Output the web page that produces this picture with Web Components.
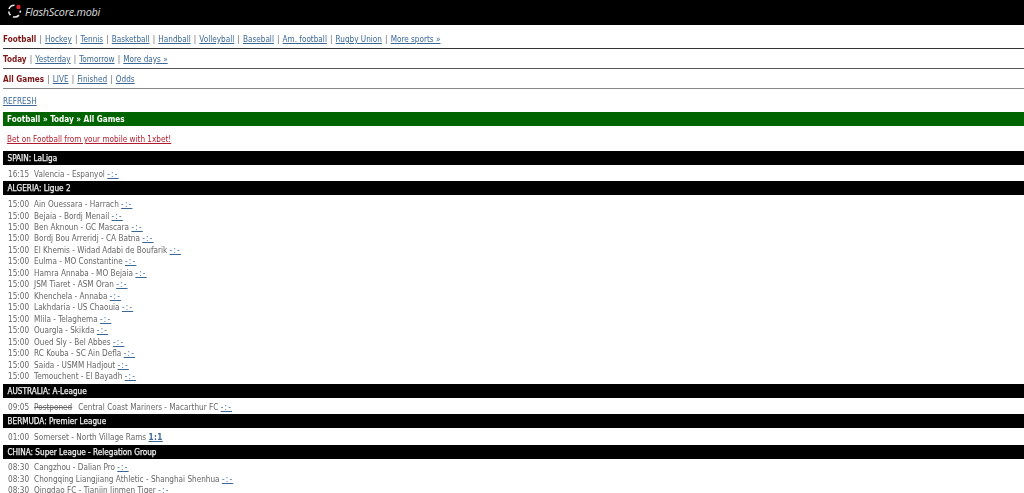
<!DOCTYPE html>
<html>
<head>
<meta charset="utf-8">
<title>FlashScore.mobi</title>
<style>
    html, body { margin: 0; padding: 0; background: #fff; height: 493px; overflow: hidden; }
    body { font-family: "DejaVu Sans Condensed", "DejaVu Sans", sans-serif; font-size: 8.15px; color: #666; }
    main { display: block; padding: 4px 0 0 3px; filter: blur(0.25px); }
</style>
</head>
<body>
<fs-header></fs-header>
<main>
    <fs-nav active="Football" items="Hockey|Tennis|Basketball|Handball|Volleyball|Baseball|Am. football|Rugby Union|More sports »" line="#333"></fs-nav>
    <fs-nav active="Today" items="Yesterday|Tomorrow|More days »" line="#555"></fs-nav>
    <fs-nav active="All Games" items="LIVE|Finished|Odds" line="#888"></fs-nav>
    <fs-refresh></fs-refresh>
    <fs-crumb>Football » Today » All Games</fs-crumb>
    <fs-promo>Bet on Football from your mobile with 1xbet!</fs-promo>

    <fs-league name="SPAIN: LaLiga">
        <fs-match time="16:15" teams="Valencia - Espanyol"></fs-match>
    </fs-league>
    <fs-league name="ALGERIA: Ligue 2">
        <fs-match time="15:00" teams="Ain Ouessara - Harrach"></fs-match>
        <fs-match time="15:00" teams="Bejaia - Bordj Menail"></fs-match>
        <fs-match time="15:00" teams="Ben Aknoun - GC Mascara"></fs-match>
        <fs-match time="15:00" teams="Bordj Bou Arreridj - CA Batna"></fs-match>
        <fs-match time="15:00" teams="El Khemis - Widad Adabi de Boufarik"></fs-match>
        <fs-match time="15:00" teams="Eulma - MO Constantine"></fs-match>
        <fs-match time="15:00" teams="Hamra Annaba - MO Bejaia"></fs-match>
        <fs-match time="15:00" teams="JSM Tiaret - ASM Oran"></fs-match>
        <fs-match time="15:00" teams="Khenchela - Annaba"></fs-match>
        <fs-match time="15:00" teams="Lakhdaria - US Chaouia"></fs-match>
        <fs-match time="15:00" teams="Mlila - Telaghema"></fs-match>
        <fs-match time="15:00" teams="Ouargla - Skikda"></fs-match>
        <fs-match time="15:00" teams="Oued Sly - Bel Abbes"></fs-match>
        <fs-match time="15:00" teams="RC Kouba - SC Ain Defla"></fs-match>
        <fs-match time="15:00" teams="Saida - USMM Hadjout"></fs-match>
        <fs-match time="15:00" teams="Temouchent - El Bayadh"></fs-match>
    </fs-league>
    <fs-league name="AUSTRALIA: A-League">
        <fs-match time="09:05" status="Postponed" teams="Central Coast Mariners - Macarthur FC"></fs-match>
    </fs-league>
    <fs-league name="BERMUDA: Premier League">
        <fs-match time="01:00" teams="Somerset - North Village Rams" score="1:1"></fs-match>
    </fs-league>
    <fs-league name="CHINA: Super League - Relegation Group">
        <fs-match time="08:30" teams="Cangzhou - Dalian Pro"></fs-match>
        <fs-match time="08:30" teams="Chongqing Liangjiang Athletic - Shanghai Shenhua"></fs-match>
        <fs-match time="08:30" teams="Qingdao FC - Tianjin Jinmen Tiger"></fs-match>
    </fs-league>
</main>

<script>
// top black bar with the logo
class FsHeader extends HTMLElement {
    connectedCallback() {
        const shadow = this.attachShadow({ mode: "open" });
        shadow.innerHTML = `
            <style>
                :host { display: flex; align-items: center; gap: 3px; height: 25px; padding: 0 0 3px 7px; box-sizing: border-box; background: #000; }
                svg { display: block; }
                span { font: italic 10.8px "Open Sans", sans-serif; color: #ddd; letter-spacing: -0.2px; }
            </style>
            <svg width="15" height="14" viewBox="0 0 15 14" fill="none" stroke="#e8e8e8" stroke-width="1.6">
                <path d="M7.5 1.2A5.8 5.8 0 0 0 2 5"/>
                <path d="M1.7 7.5a5.8 5.8 0 0 0 1.8 3.6"/>
                <path d="M6 12.7a5.8 5.8 0 0 0 6-1.6"/>
                <path d="M13.1 8.6a5.8 5.8 0 0 0 .2-2"/>
                <circle cx="11.5" cy="3" r="2.2" fill="#d8232a" stroke="none"/>
            </svg>
            <span>FlashScore.mobi</span>
        `;
    }
}

// one row of menu links, with the rule underneath
class FsNav extends HTMLElement {
    connectedCallback() {
        const shadow = this.attachShadow({ mode: "open" });
        const links = this.getAttribute("items").split("|")
            .map(t => `<i>|</i><a href="#">${t}</a>`).join("");
        shadow.innerHTML = `
            <style>
                :host { display: block; height: 20px; box-sizing: border-box; padding-top: 4px; border-bottom: 1px solid ${this.getAttribute("line")}; line-height: 12px; }
                b { color: #7a1616; }
                a { color: #3a6795; }
                i { font-style: normal; color: #666; margin: 0 3.1px; }
            </style>
            <b>${this.getAttribute("active")}</b>${links}
        `;
    }
}

class FsRefresh extends HTMLElement {
    connectedCallback() {
        const shadow = this.attachShadow({ mode: "open" });
        shadow.innerHTML = `
            <style>
                :host { display: block; height: 23px; box-sizing: border-box; padding-top: 6px; line-height: 12px; }
                a { color: #3a6795; }
            </style>
            <a href="#">REFRESH</a>
        `;
    }
}

class FsCrumb extends HTMLElement {
    connectedCallback() {
        const shadow = this.attachShadow({ mode: "open" });
        shadow.innerHTML = `
            <style>
                :host { display: block; height: 14px; padding-left: 4px; background: #006400; color: #fff; font-weight: bold; line-height: 15px; }
            </style>
            <slot></slot>
        `;
    }
}

class FsPromo extends HTMLElement {
    connectedCallback() {
        const shadow = this.attachShadow({ mode: "open" });
        shadow.innerHTML = `
            <style>
                :host { display: block; height: 25px; box-sizing: border-box; padding: 7px 0 0 4px; line-height: 12px; }
                a { color: #b01c2e; }
            </style>
            <a href="#"><slot></slot></a>
        `;
    }
}

// black league title followed by its matches
class FsLeague extends HTMLElement {
    connectedCallback() {
        const shadow = this.attachShadow({ mode: "open" });
        shadow.innerHTML = `
            <style>
                :host { display: block; }
                h2 { margin: 0; height: 14px; padding-left: 4.5px; background: #000; color: #eee; font-size: inherit; font-weight: normal; line-height: 15px; -webkit-text-stroke: 0.25px #eee; }
                div { padding: 3.6px 0 1.4px; }
            </style>
            <h2>${this.getAttribute("name")}</h2>
            <div><slot></slot></div>
        `;
    }
}

class FsMatch extends HTMLElement {
    connectedCallback() {
        const shadow = this.attachShadow({ mode: "open" });
        const status = this.getAttribute("status");
        const score = this.getAttribute("score");
        shadow.innerHTML = `
            <style>
                :host { display: block; height: 11.47px; padding-left: 5px; line-height: 11.47px; white-space: nowrap; }
                .t { margin-right: 5px; }
                s { margin-right: 6px; }
                a { color: #3a6795; letter-spacing: 1.2px; }
                a.done { font-weight: bold; letter-spacing: 0.4px; }
            </style>
            <span class="t">${this.getAttribute("time")}</span>${status ? `<s>${status}</s>` : ""}<span>${this.getAttribute("teams")}</span>
            <a href="#" class="${score ? "done" : ""}">${score || "-:-"}</a>
        `;
    }
}

customElements.define("fs-header", FsHeader);
customElements.define("fs-nav", FsNav);
customElements.define("fs-refresh", FsRefresh);
customElements.define("fs-crumb", FsCrumb);
customElements.define("fs-promo", FsPromo);
customElements.define("fs-league", FsLeague);
customElements.define("fs-match", FsMatch);
</script>
</body>
</html>
